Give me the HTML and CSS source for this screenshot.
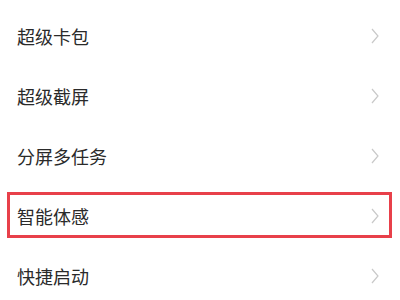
FILE: index.html
```html
<!DOCTYPE html>
<html lang="zh-CN">
<head>
<meta charset="utf-8">
<link rel="stylesheet" href="styles.css">
</head>
<body>
<ul class="menu">
  <li class="item"><span class="label">超级卡包</span><svg class="chev" viewBox="0 0 8 16"><path d="M1 1 L7 8 L1 15"/></svg></li>
  <li class="item"><span class="label">超级截屏</span><svg class="chev" viewBox="0 0 8 16"><path d="M1 1 L7 8 L1 15"/></svg></li>
  <li class="item"><span class="label">分屏多任务</span><svg class="chev" viewBox="0 0 8 16"><path d="M1 1 L7 8 L1 15"/></svg></li>
  <li class="item highlight"><span class="label">智能体感</span><svg class="chev" viewBox="0 0 8 16"><path d="M1 1 L7 8 L1 15"/></svg></li>
  <li class="item"><span class="label">快捷启动</span><svg class="chev" viewBox="0 0 8 16"><path d="M1 1 L7 8 L1 15"/></svg></li>
</ul>
</body>
</html>
```
FILE: styles.css
```css
html, body {
  margin: 0;
  padding: 0;
  background: #ffffff;
}
body {
  width: 400px;
  height: 300px;
  overflow: hidden;
  font-family: "Noto Sans CJK SC", "Noto Sans", sans-serif;
}
.menu {
  list-style: none;
  margin: 0;
  padding: 6px 0 0 0;
}
.item {
  position: relative;
  height: 60px;
  display: flex;
  align-items: center;
  justify-content: space-between;
  padding: 0 21px 0 17px;
}
.label {
  font-size: 18px;
  color: #2a2a2a;
  line-height: 1;
}
.chev {
  width: 8px;
  height: 16px;
  fill: none;
  stroke: #c9c9c9;
  stroke-width: 1.2;
}
.highlight::after {
  content: "";
  position: absolute;
  left: 7px;
  right: 8px;
  top: 6px;
  bottom: 8px;
  border: 3px solid #e8404a;
}
```
